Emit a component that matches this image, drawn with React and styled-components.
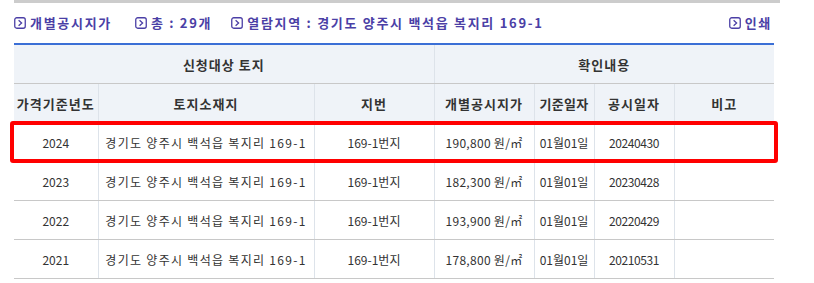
import React from "react";
import styled, { createGlobalStyle } from "styled-components";

const GlobalStyle = createGlobalStyle`
	body {
		margin: 0;
		background: #fff;
		font-family: "Noto Sans CJK KR", "Noto Sans", sans-serif;
	}
`;

const rows = [
	{ year: "2024", addr: "경기도 양주시 백석읍 복지리 169-1", jibun: "169-1번지", price: "190,800", base: "01월01일", date: "20240430" },
	{ year: "2023", addr: "경기도 양주시 백석읍 복지리 169-1", jibun: "169-1번지", price: "182,300", base: "01월01일", date: "20230428" },
	{ year: "2022", addr: "경기도 양주시 백석읍 복지리 169-1", jibun: "169-1번지", price: "193,900", base: "01월01일", date: "20220429" },
	{ year: "2021", addr: "경기도 양주시 백석읍 복지리 169-1", jibun: "169-1번지", price: "178,800", base: "01월01일", date: "20210531" },
];

const ArrowIcon = () => (
	<svg width="12" height="12" viewBox="0 0 12 12">
		<rect x="0.75" y="0.75" width="10.5" height="10.5" rx="2" fill="none" stroke="#4b3fa6" strokeWidth="1.3" />
		<path d="M4.6 3.2 L7.6 6 L4.6 8.8" fill="none" stroke="#4b3fa6" strokeWidth="1.3" />
	</svg>
);

const App = () => {
	return (
		<>
			<GlobalStyle />
			<Page>
				<TopEdge />
				<InfoBar>
					<InfoItem $gap="23px">
						<ArrowIcon />
						<span>개별공시지가</span>
					</InfoItem>
					<InfoItem $gap="19px">
						<ArrowIcon />
						<span>총 : 29개</span>
					</InfoItem>
					<InfoItem>
						<ArrowIcon />
						<span>열람지역 : 경기도 양주시 백석읍 복지리 169-1</span>
					</InfoItem>
					<PrintLink>
						<ArrowIcon />
						<span>인쇄</span>
					</PrintLink>
				</InfoBar>
				<TableWrap>
					<Table>
						<colgroup>
							<col width="84" />
							<col width="216" />
							<col width="120" />
							<col width="100" />
							<col width="60" />
							<col width="80" />
							<col width="100" />
						</colgroup>
						<thead>
							<tr>
								<Th colSpan={3}>신청대상 토지</Th>
								<Th colSpan={4}>확인내용</Th>
							</tr>
							<tr>
								<Th>가격기준년도</Th>
								<Th>토지소재지</Th>
								<Th>지번</Th>
								<Th>개별공시지가</Th>
								<Th $tight>기준일자</Th>
								<Th>공시일자</Th>
								<Th>비고</Th>
							</tr>
						</thead>
						<tbody>
							{rows.map((r) => (
								<tr key={r.year}>
									<Td>{r.year}</Td>
									<Td $spacing="1.3px">{r.addr}</Td>
									<Td>{r.jibun}</Td>
									<Td $spacing="0.3px">
										{r.price} 원/㎡
									</Td>
									<Td>{r.base}</Td>
									<Td $spacing="-0.4px">{r.date}</Td>
									<Td></Td>
								</tr>
							))}
						</tbody>
					</Table>
					<Highlight />
				</TableWrap>
			</Page>
		</>
	);
};

export default App;

const Page = styled.div`
	width: 766px;
	padding-left: 14px;
`;

const TopEdge = styled.div`
	height: 0;
	border-bottom: 3px solid #cccccc;
	border-right: 2px solid #cccccc;
`;

const InfoBar = styled.div`
	display: flex;
	align-items: center;
	height: 39px;
	padding: 0 8px 1px 0;
	color: #4b3fa6;
	font-size: 13px;
	font-weight: 700;
	letter-spacing: 1.7px;
`;

const InfoItem = styled.div`
	display: flex;
	align-items: center;
	gap: 4px;
	margin-right: ${(p) => p.$gap || "0"};
	svg {
		flex: none;
	}
`;

const PrintLink = styled(InfoItem)`
	margin-left: auto;
`;

const TableWrap = styled.div`
	position: relative;
	width: 760px;
`;

const Table = styled.table`
	width: 760px;
	border-collapse: collapse;
	table-layout: fixed;
	border-top: 2px solid #3b6fd6;
	color: #333;
`;

const Th = styled.th`
	height: 38px;
	padding: 0;
	background: #eff3f8;
	font-size: 13px;
	font-weight: 700;
	letter-spacing: ${(p) => (p.$tight ? "0.3px" : "1px")};
	white-space: nowrap;
	overflow: hidden;
	text-align: center;
	border-bottom: 1px solid #c8c8c8;
	border-left: 1px solid #dde3ea;
	&:first-child {
		border-left: none;
	}
`;

const Td = styled.td`
	height: 38px;
	padding: 0;
	font-size: 12px;
	letter-spacing: ${(p) => p.$spacing || "0"};
	white-space: nowrap;
	text-align: center;
	border-bottom: 1px solid #c8c8c8;
	border-left: 1px solid #dde3ea;
	&:first-child {
		border-left: none;
	}
`;

const Highlight = styled.div`
	position: absolute;
	left: -4px;
	top: 78px;
	width: 768px;
	height: 42px;
	box-sizing: border-box;
	border: 4px solid #ff0000;
	border-radius: 3px;
	pointer-events: none;
`;
